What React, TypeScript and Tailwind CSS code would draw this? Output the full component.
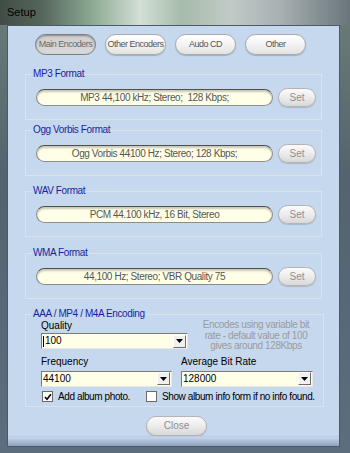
import React from 'react';

const font = { fontFamily: '"Liberation Sans", Arial, sans-serif' };

function TabButton({ label, pressed }: { label: string; pressed?: boolean }) {
  if (pressed) {
    return (
      <div className="w-[61px] h-[21px] rounded-full border border-[#7d7d7d] bg-[linear-gradient(180deg,#cfcfcf,#d9d9d9)] shadow-[inset_0_1px_2px_rgba(0,0,0,0.35)] flex items-center justify-center text-[9px] tracking-[-0.5px] text-[#6a6a6a] whitespace-nowrap">
        {label}
      </div>
    );
  }
  return (
    <div className="w-[61px] h-[21px] rounded-full border border-[#a9a9a9] bg-[linear-gradient(180deg,#ffffff,#f3f3f3_50%,#e2e2e2)] shadow-[0_1px_1px_rgba(0,0,0,0.2)] flex items-center justify-center text-[9px] tracking-[-0.5px] text-[#555] whitespace-nowrap">
      {label}
    </div>
  );
}

function SetButton() {
  return (
    <div className="w-[38px] h-[19px] rounded-full border border-[#b4b4b4] bg-[linear-gradient(180deg,#fbfbfb,#ececec_50%,#d8d8d8)] shadow-[0_1px_1px_rgba(0,0,0,0.15)] flex items-center justify-center text-[10px] text-[#8f8f8f]">
      Set
    </div>
  );
}

function FormatGroup({ title, value, mt }: { title: string; value: string; mt: string }) {
  return (
    <fieldset className={`${mt} ml-[17px] w-[297px] border border-[#dde2e8]`}>
      <legend className="ml-[6px] px-[1px] text-[10px] leading-[12px] tracking-[-0.4px] text-[#1b1f9e]">{title}</legend>
      <div className="flex items-center gap-[5px] pl-[10px] pt-[8px] pb-[12px]">
        <div className="w-[237px] h-[17px] rounded-full border border-[#8c8c8c] border-t-[#4f4f4f] bg-[#ffffe7] shadow-[inset_0_2px_2px_rgba(0,0,0,0.22)] flex items-center justify-center text-[10px] tracking-[-0.4px] text-[#555] whitespace-pre">
          {value}
        </div>
        <SetButton />
      </div>
    </fieldset>
  );
}

function Combo({ value, width, caret }: { value: string; width: string; caret?: boolean }) {
  return (
    <div className={`${width} h-[16px] border border-[#7a7a7a] border-r-[#e8e8e8] border-b-[#e8e8e8] bg-[#ffffe7] flex items-center`}>
      <div className="flex-1 flex items-center pl-[1px] text-[10px] text-black leading-[12px]">
        {caret && <span className="w-[1px] h-[11px] bg-black mr-[1px]" />}
        {value}
      </div>
      <div className="w-[13px] h-[13px] mr-[1px] bg-[#f0f0f0] border border-[#fff] border-r-[#6d6d6d] border-b-[#6d6d6d] flex items-center justify-center">
        <svg width="7" height="4" viewBox="0 0 7 4">
          <path d="M0 0h7L3.5 4z" fill="#000" />
        </svg>
      </div>
    </div>
  );
}

function Check({ checked, label }: { checked?: boolean; label: string }) {
  return (
    <div className="flex items-center gap-[5px] whitespace-nowrap">
      <div className="w-[11px] h-[11px] border border-[#6a6a6a] bg-white flex items-center justify-center shrink-0">
        {checked && (
          <svg width="8" height="8" viewBox="0 0 8 8">
            <path d="M1 4l2 2.2L7 1.2" stroke="#000" strokeWidth="1.6" fill="none" />
          </svg>
        )}
      </div>
      <span className="text-[10px] leading-[12px] tracking-[-0.4px] text-black">{label}</span>
    </div>
  );
}

export default function App() {
  return (
    <div
      className="w-[350px] h-[453px] flex flex-col overflow-hidden bg-[linear-gradient(180deg,#6b7d78_0%,#53636f_40%,#5c6d7e_100%)]"
      style={font}
    >
      {/* title bar (glass) */}
      <div className="h-[25px] shrink-0 flex items-center pl-[7px] bg-[linear-gradient(90deg,#424c47_0%,#55665b_12%,#8ba892_26%,#d3dfd5_40%,#a6bba9_52%,#c2cac7_66%,#a7b0b2_80%,#6a767b_100%)]">
        <span className="text-[11px] text-black">Setup</span>
      </div>

      {/* client area */}
      <div className="ml-[7px] w-[333px] h-[422px] flex flex-col border border-[#4b5a68] bg-[#c6d8ee]">
        <div className="flex gap-[9px] pl-[27px] pt-[8px]">
          <TabButton label="Main Encoders" pressed />
          <TabButton label="Other Encoders" />
          <TabButton label="Audo CD" />
          <TabButton label="Other" />
        </div>

        <FormatGroup mt="mt-[13px]" title="MP3 Format" value="MP3 44,100 kHz; Stereo;  128 Kbps;" />
        <FormatGroup mt="mt-[4px]" title="Ogg Vorbis Format" value="Ogg Vorbis 44100 Hz; Stereo; 128 Kbps;" />
        <FormatGroup mt="mt-[9px]" title="WAV Format" value="PCM 44.100 kHz, 16 Bit, Stereo" />
        <FormatGroup mt="mt-[10px]" title="WMA Format" value="44,100 Hz; Stereo; VBR Quality 75" />

        <fieldset className="mt-[9px] ml-[17px] w-[297px] border border-[#dde2e8]">
          <legend className="ml-[6px] px-[1px] text-[10px] leading-[12px] tracking-[-0.4px] text-[#1b1f9e]">
            AAA / MP4 / M4A Encoding
          </legend>
          <div className="pl-[15px] pr-[8px] pb-[3px]">
            <div className="flex">
              <div className="w-[147px]">
                <div className="text-[10px] leading-[11px] text-black">Quality</div>
                <div className="mt-[2px]">
                  <Combo value="100" width="w-[147px]" caret />
                </div>
              </div>
              <div className="ml-[12px] w-[112px] text-center text-[10px] leading-[10.5px] tracking-[-0.4px] text-[#9b9b9b] whitespace-nowrap">
                Encodes using variable bit
                <br />
                rate - default value of 100
                <br />
                gives around 128Kbps
              </div>
            </div>
            <div className="flex mt-[4px] gap-[9px]">
              <div>
                <div className="text-[10px] leading-[11px] text-black">Frequency</div>
                <div className="mt-[4px]">
                  <Combo value="44100" width="w-[131px]" />
                </div>
              </div>
              <div>
                <div className="text-[10px] leading-[11px] text-black whitespace-nowrap">Average Bit Rate</div>
                <div className="mt-[4px]">
                  <Combo value="128000" width="w-[132px]" />
                </div>
              </div>
            </div>
            <div className="flex mt-[4px] pl-[1px] gap-[16px]">
              <Check checked label="Add album photo." />
              <Check label="Show album info form if no info found." />
            </div>
          </div>
        </fieldset>

        <div className="mt-[9px] ml-[138px] w-[61px] h-[20px] rounded-full border border-[#b4b4b4] bg-[linear-gradient(180deg,#fbfbfb,#ececec_50%,#d8d8d8)] shadow-[0_1px_1px_rgba(0,0,0,0.15)] flex items-center justify-center text-[10px] text-[#8f8f8f]">
          Close
        </div>

        <div className="flex-1" />
        <div className="h-[10px] bg-[linear-gradient(180deg,#c6d8ee,#a9bcd4_50%,#8ea2bb)] border-t border-[#b9cbe2]" />
      </div>
    </div>
  );
}
